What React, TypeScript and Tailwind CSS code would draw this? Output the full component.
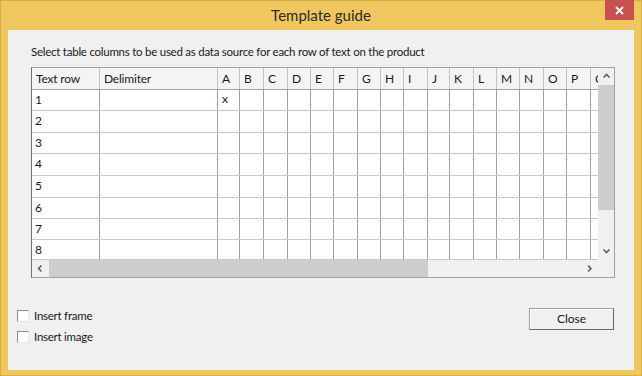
import React from "react";

const font = { fontFamily: 'Lato, "Noto Sans", sans-serif' };

const letters = ["A", "B", "C", "D", "E", "F", "G", "H", "I", "J", "K", "L", "M", "N", "O", "P", "Q"];
// pixel widths of the letter columns (right grid line included)
const letterWidths = [22, 24, 24, 23, 23, 24, 23, 23, 24, 22, 24, 23, 23, 24, 23, 24, 24];
const rowHeights = [21, 22, 21, 22, 22, 21, 21, 20];

function Chevron({ dir }: { dir: "up" | "down" | "left" | "right" }) {
  const paths: Record<string, string> = {
    up: "M1.5 5.5 L4.5 2.5 L7.5 5.5",
    down: "M1.5 2.5 L4.5 5.5 L7.5 2.5",
    left: "M5.5 1.5 L2.5 4.5 L5.5 7.5",
    right: "M3 1.5 L6 4.5 L3 7.5",
  };
  return (
    <svg width="9" height="9" viewBox="0 0 9 9">
      <path d={paths[dir]} fill="none" stroke="#606060" strokeWidth="1.6" />
    </svg>
  );
}

function Checkbox({ label }: { label: string }) {
  return (
    <label className="flex h-[21px] items-center gap-[5px]">
      <span className="block h-[12px] w-[12px] border-t border-l border-b border-r border-t-[#8c8c8c] border-l-[#8c8c8c] border-b-[#e8e8e8] border-r-[#e8e8e8] bg-white" />
      <span className="text-[11.5px] tracking-[-0.25px] text-[#1a1a1a]">{label}</span>
    </label>
  );
}

function Grid() {
  return (
    <div className="flex h-[211px] w-[584px] border border-[#a0a0a0] border-l-[#6f6f6f] bg-white">
      <div className="flex w-[566px] flex-col">
        <div className="h-[192px] overflow-hidden">
          {/* header */}
          <div className="flex h-[22px] w-max border-b border-[#a0a0a0] bg-[#f4f4f4] text-[12px] text-[#1a1a1a]">
            <div className="w-[68px] border-r border-[#c4c4c4] pl-[4px] leading-[21px] tracking-[-0.2px]">Text row</div>
            <div className="w-[118px] border-r border-[#c4c4c4] pl-[4px] leading-[21px] tracking-[-0.2px]">Delimiter</div>
            {letters.map((l, i) => (
              <div
                key={l}
                className="border-r border-[#c4c4c4] pl-[4px] leading-[21px]"
                style={{ width: letterWidths[i] }}
              >
                {l}
              </div>
            ))}
          </div>
          {rowHeights.map((h, r) => (
            <div key={r} className="flex w-max border-b border-[#c8c8c8] text-[12px] text-[#1a1a1a]" style={{ height: h }}>
              <div className="w-[68px] border-r border-[#a0a0a0] pl-[3px] leading-[20px]">{r + 1}</div>
              <div className="w-[118px] border-r border-[#a0a0a0]" />
              {letters.map((l, i) => (
                <div
                  key={l}
                  className="border-r border-[#a0a0a0] pl-[4px] leading-[18px]"
                  style={{ width: letterWidths[i] }}
                >
                  {r === 0 && i === 0 ? "x" : ""}
                </div>
              ))}
            </div>
          ))}
        </div>
        {/* horizontal scrollbar */}
        <div className="flex h-[17px] bg-[#f0f0f0]">
          <div className="flex w-[17px] items-center justify-center">
            <Chevron dir="left" />
          </div>
          <div className="w-[379px] bg-[#cdcdcd]" />
          <div className="flex-1" />
          <div className="flex w-[17px] items-center justify-center">
            <Chevron dir="right" />
          </div>
        </div>
      </div>
      {/* vertical scrollbar */}
      <div className="flex w-[16px] flex-col bg-[#f0f0f0]">
        <div className="flex h-[17px] items-center justify-center">
          <Chevron dir="up" />
        </div>
        <div className="h-[125px] bg-[#cdcdcd]" />
        <div className="flex-1" />
        <div className="flex h-[17px] items-center justify-center">
          <Chevron dir="down" />
        </div>
        <div className="h-[17px]" />
      </div>
    </div>
  );
}

export default function App() {
  return (
    <div className="flex h-[376px] w-[642px] flex-col border border-[#d9ad48] bg-[#f0c75e]" style={font}>
      {/* title bar */}
      <div className="relative flex h-[29px] items-center justify-center">
        <span className="text-[15px] text-[#2b2b2b]">Template guide</span>
        <button className="absolute right-[7px] top-[-1px] flex h-[20px] w-[29px] items-center justify-center bg-[#c75050]">
          <svg width="9" height="9" viewBox="0 0 9 9">
            <path d="M1 1 L8 8 M8 1 L1 8" stroke="white" strokeWidth="1.8" />
          </svg>
        </button>
      </div>

      {/* client area */}
      <div className="mx-[7px] mb-[5px] flex flex-1 flex-col bg-[#f0f0f0]">
        <div className="ml-[23px] mt-[14px] text-[11.5px] leading-[16px] tracking-[-0.25px] text-[#1a1a1a]">
          Select table columns to be used as data source for each row of text on the product
        </div>
        <div className="ml-[23px] mt-[7px]">
          <Grid />
        </div>
        <div className="mt-[27px] flex items-start justify-between">
          <div className="ml-[9px] flex flex-col">
            <Checkbox label="Insert frame" />
            <Checkbox label="Insert image" />
          </div>
          <button className="mr-[20px] mt-[3px] h-[22px] w-[85px] border border-[#a0a0a0] border-r-[#6a6a6a] border-b-[#6a6a6a] bg-[#f0f0f0] text-[12px] text-[#1a1a1a] shadow-[inset_1px_1px_0_#ffffff]">
            Close
          </button>
        </div>
      </div>
    </div>
  );
}
